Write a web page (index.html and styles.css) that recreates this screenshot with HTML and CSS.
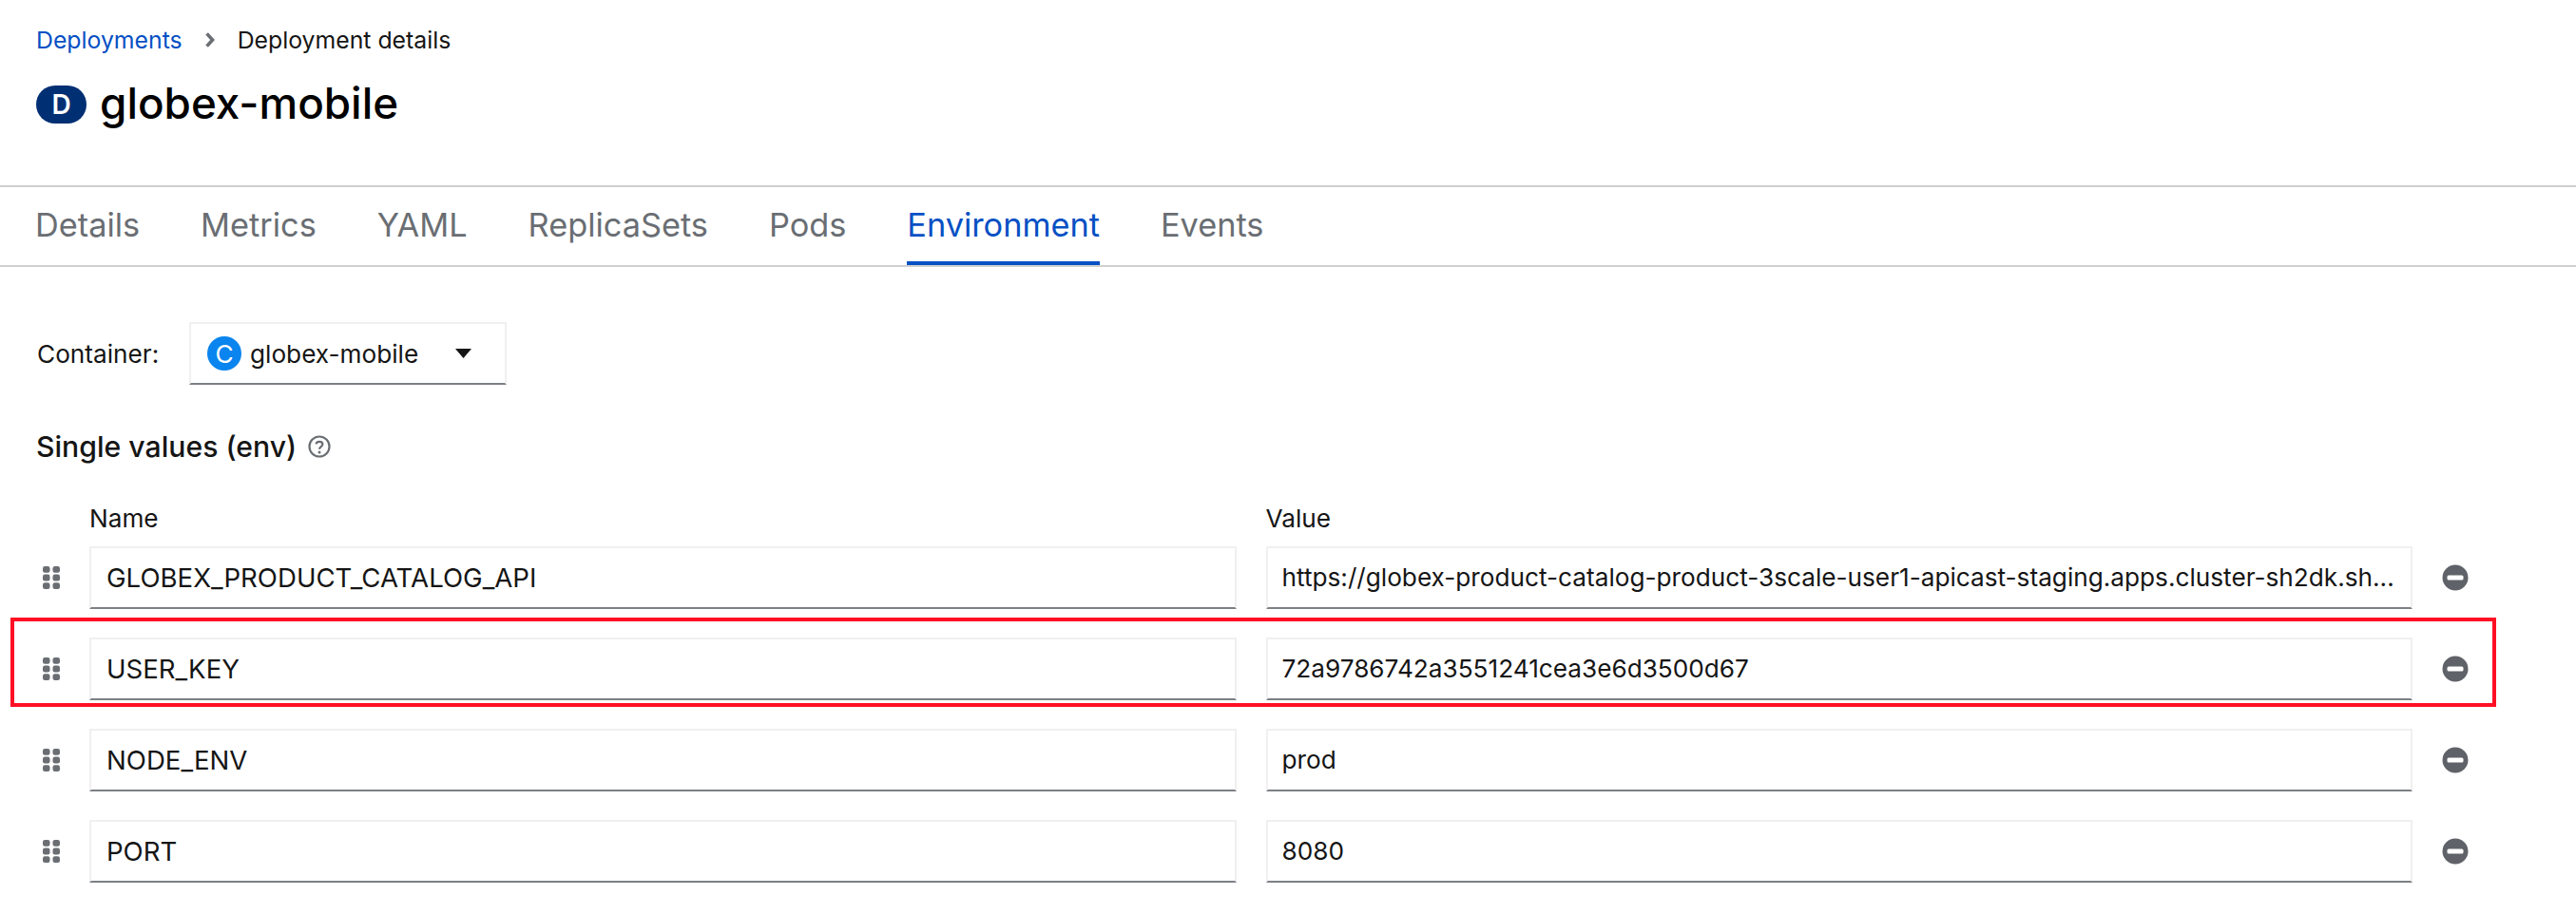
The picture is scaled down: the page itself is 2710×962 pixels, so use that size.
FILE: index.html
```html
<html>

<head>
    <title>
        globex-mobile - Deployment details
    </title>
    <link rel="stylesheet" href="styles.css">
</head>

<body>
    <svg class="icon-defs" width="0" height="0">
        <symbol id="grip" viewBox="0 0 18 24">
            <rect x="0" y="0" width="7.5" height="6.8" rx="2.2"></rect>
            <rect x="10.5" y="0" width="7.5" height="6.8" rx="2.2"></rect>
            <rect x="0" y="8.6" width="7.5" height="6.8" rx="2.2"></rect>
            <rect x="10.5" y="8.6" width="7.5" height="6.8" rx="2.2"></rect>
            <rect x="0" y="17.2" width="7.5" height="6.8" rx="2.2"></rect>
            <rect x="10.5" y="17.2" width="7.5" height="6.8" rx="2.2"></rect>
        </symbol>
        <symbol id="minus" viewBox="0 0 28 28">
            <circle cx="14" cy="14" r="13.5" fill="#5f6268"></circle>
            <rect x="5.5" y="11.5" width="17" height="5" rx="1.6" fill="#fff"></rect>
        </symbol>
    </svg>

    <div class="page-head">
        <nav class="crumbs">
            <a class="crumb-link">Deployments</a>
            <svg class="crumb-sep" viewBox="0 0 10 16" width="10" height="16">
                <path d="M1.6 1.4 L7.6 8 L1.6 14.6" fill="none" stroke="#6a6e73" stroke-width="3.6"></path>
            </svg>
            <span>Deployment details</span>
        </nav>
        <h1 class="title"><span class="badge-d">D</span>globex-mobile</h1>
    </div>

    <ul class="tabs">
        <li>Details</li>
        <li>Metrics</li>
        <li>YAML</li>
        <li>ReplicaSets</li>
        <li>Pods</li>
        <li class="active">Environment</li>
        <li>Events</li>
    </ul>

    <div class="content">
        <div class="container-row">
            <span class="container-label">Container:</span>
            <div class="select">
                <span class="badge-c">C</span>
                <span class="select-text">globex-mobile</span>
                <svg class="caret" viewBox="0 0 17 10" width="17" height="10">
                    <path d="M0 0 H17 L8.5 10 Z" fill="#151515"></path>
                </svg>
            </div>
        </div>

        <h2 class="section-title">
            Single values (env)
            <svg class="help" viewBox="0 0 24 24" width="24" height="24">
                <circle cx="12" cy="12" r="10.5" fill="none" stroke="#6a6e73" stroke-width="2.2"></circle>
                <path d="M8.6 9.4 C8.8 5.9 15.4 5.9 15.4 9.6 C15.4 12.2 12 12 12 14.8" fill="none" stroke="#6a6e73" stroke-width="2.2"></path>
                <circle cx="12" cy="18" r="1.5" fill="#6a6e73"></circle>
            </svg>
        </h2>

        <div class="env-row env-labels">
            <span></span>
            <span>Name</span>
            <span>Value</span>
            <span></span>
        </div>

        <div class="env-list">
            <div class="env-row">
                <svg class="grip"><use href="#grip"></use></svg>
                <div class="field key">GLOBEX_PRODUCT_CATALOG_API</div>
                <div class="field val">https://globex-product-catalog-product-3scale-user1-apicast-staging.apps.cluster-sh2dk.sh...</div>
                <svg class="remove"><use href="#minus"></use></svg>
            </div>
            <div class="env-row">
                <svg class="grip"><use href="#grip"></use></svg>
                <div class="field key">USER_KEY</div>
                <div class="field val">72a9786742a3551241cea3e6d3500d67</div>
                <svg class="remove"><use href="#minus"></use></svg>
                <div class="highlight"></div>
            </div>
            <div class="env-row">
                <svg class="grip"><use href="#grip"></use></svg>
                <div class="field key">NODE_ENV</div>
                <div class="field val">prod</div>
                <svg class="remove"><use href="#minus"></use></svg>
            </div>
            <div class="env-row">
                <svg class="grip"><use href="#grip"></use></svg>
                <div class="field key">PORT</div>
                <div class="field val">8080</div>
                <svg class="remove"><use href="#minus"></use></svg>
            </div>
        </div>
    </div>
</body>
</html>
```

FILE: styles.css
```css
body {
    margin: 0;
    background: #fff;
    color: #151515;
    font-family: "Inter", "Liberation Sans", sans-serif;
    font-size: 26.2px;
    overflow: hidden;
}

.icon-defs {
    position: absolute;
}

.page-head {
    padding: 24px 0 0 38px;
    height: 195px;
    box-sizing: border-box;
}

.crumbs {
    display: flex;
    align-items: center;
    height: 36px;
    font-size: 24.8px;
}

.crumb-link {
    color: #0550c4;
}

.crumb-sep {
    margin: 0 24px 0 24px;
}

.title {
    display: flex;
    align-items: center;
    margin: 18px 0 0;
    height: 60px;
    font-size: 45.8px;
    font-weight: 500;
    color: #000;
}

.badge-d {
    display: flex;
    align-items: center;
    justify-content: center;
    width: 53px;
    height: 40px;
    margin: 4px 14px 0 0;
    border-radius: 20px;
    background: #002f73;
    color: #fff;
    font-size: 28px;
    font-weight: 600;
}

.tabs {
    display: flex;
    gap: 64px;
    list-style: none;
    margin: 0;
    padding: 0 0 0 37px;
    border-top: 2px solid #cfcfcf;
    border-bottom: 2px solid #cfcfcf;
    color: #6a6e73;
    font-size: 34.3px;
}

.tabs li {
    display: flex;
    align-items: center;
    height: 78px;
    border-bottom: 4px solid transparent;
}

.tabs .active {
    color: #0550c4;
    border-bottom-color: #0550c4;
}

.content {
    padding: 58px 0 0 38px;
}

.container-row {
    display: flex;
    align-items: center;
    gap: 30px;
    padding-left: 1px;
}

.container-label {
    width: 130px;
}

.select {
    display: flex;
    align-items: center;
    width: 334px;
    height: 66px;
    box-sizing: border-box;
    padding-left: 17px;
    border: 2px solid #f0f0f0;
    border-bottom-color: #7c7f84;
}

.badge-c {
    display: flex;
    align-items: center;
    justify-content: center;
    width: 36px;
    height: 36px;
    margin-right: 9px;
    border-radius: 50%;
    background: #0a84ee;
    color: #fff;
}

.select-text {
    width: 216px;
}

.section-title {
    display: flex;
    align-items: center;
    gap: 12px;
    height: 40px;
    margin: 45px 0 0;
    font-size: 30.2px;
    font-weight: 500;
}

.env-row {
    position: relative;
    display: grid;
    grid-template-columns: 18px 1fr 1fr 28px;
    column-gap: 31px;
    align-items: center;
    width: 2552px;
    margin-left: 7px;
}

.env-labels {
    height: 36px;
    margin-top: 37px;
    margin-bottom: 12px;
}

.env-list {
    display: flex;
    flex-direction: column;
    gap: 30px;
}

.grip {
    width: 18px;
    height: 24px;
    fill: #6a6e73;
}

.field {
    height: 66px;
    box-sizing: border-box;
    padding: 0 15px;
    border: 2px solid #f0f0f0;
    border-bottom-color: #7c7f84;
    line-height: 62px;
    white-space: nowrap;
    overflow: hidden;
}

.key {
    padding-left: 16px;
    font-size: 27.6px;
}

.remove {
    width: 28px;
    height: 28px;
}

.highlight {
    position: absolute;
    top: -21px;
    bottom: -7px;
    left: -34px;
    right: -29px;
    border: 4px solid #ff0f24;
}
```
